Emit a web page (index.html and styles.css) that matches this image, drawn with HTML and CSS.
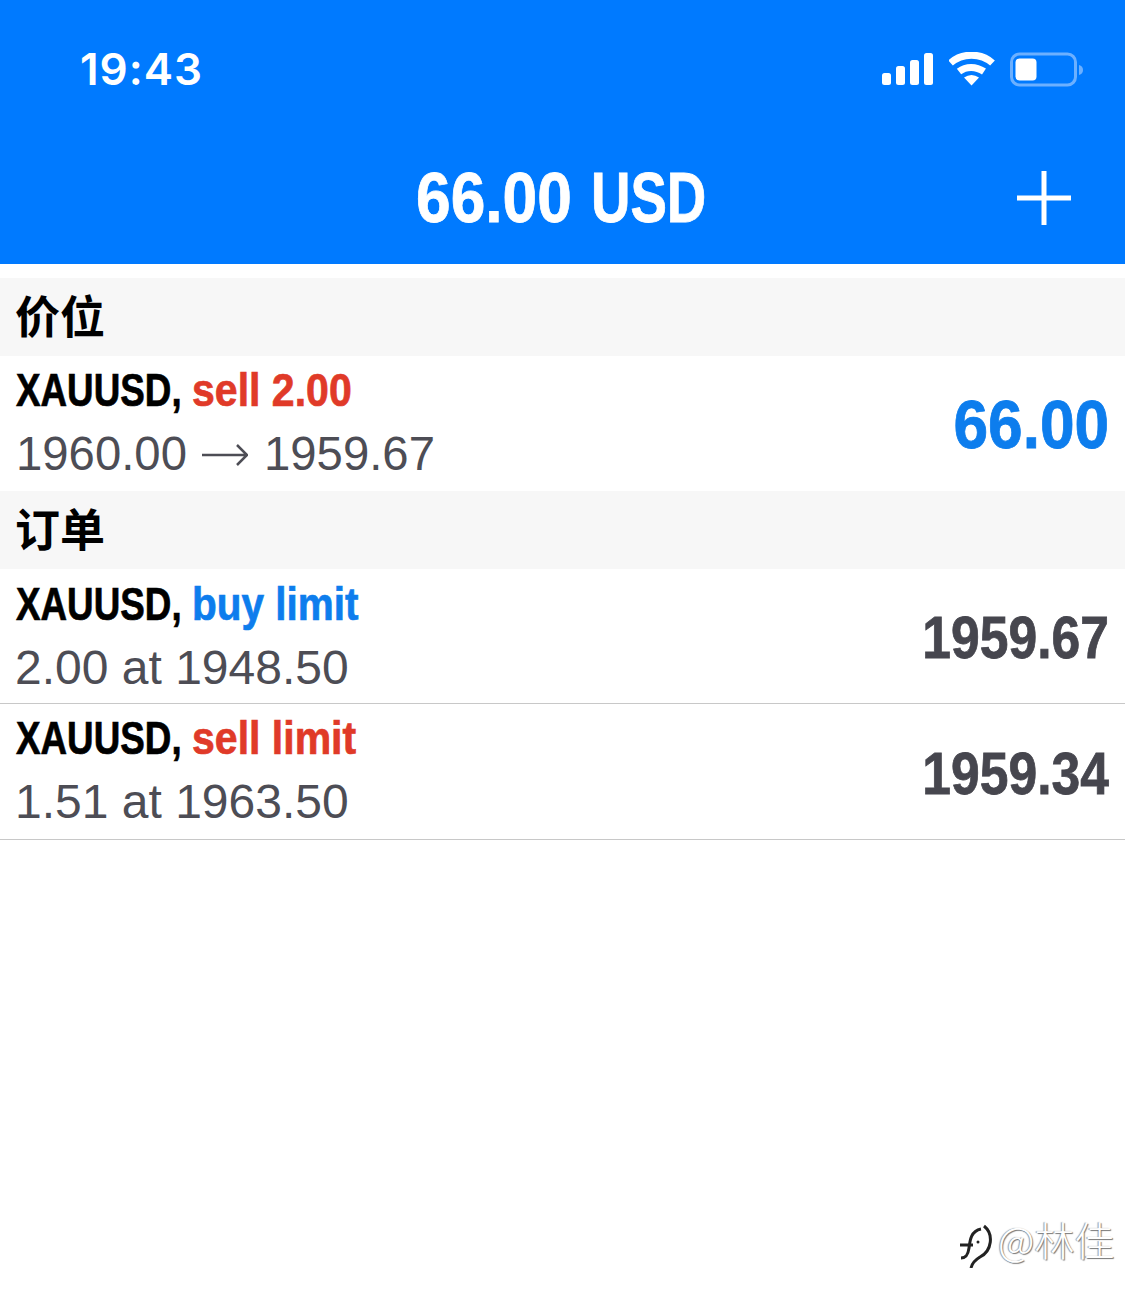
FILE: index.html
```html
<!DOCTYPE html>
<html lang="zh-CN">

<head>
	<meta charset="UTF-8">
	<meta name="viewport" content="width=device-width, initial-scale=1.0">
	<title>Trade</title>
	<link rel="stylesheet" href="styles.css">
</head>

<body>
	<header class="top">
		<div class="status">
			<span class="time">19:43</span>
			<div class="status-icons">
				<svg class="signal" width="52" height="34" viewBox="0 0 52 34">
					<rect x="0" y="21" width="9" height="12" rx="2.5" />
					<rect x="14" y="14" width="9" height="19" rx="2.5" />
					<rect x="28" y="8" width="9" height="25" rx="2.5" />
					<rect x="42" y="1" width="9" height="32" rx="2.5" />
				</svg>
				<svg class="wifi" width="46" height="36" viewBox="0 0 46 36">
					<path d="M1.5 11C13 .5 32 .5 43.5 11" />
					<path d="M10 19.500C17 14 27 14 35 19.500" />
					<path d="M22.500 33.500L15 25.500Q22.500 20.500 30 25.500Z" class="wifi-dot" />
				</svg>
				<svg class="battery" width="74" height="36" viewBox="0 0 74 36">
					<rect x="1.500" y="2" width="64" height="31" rx="8" class="batt-shell" />
					<rect x="5.500" y="6.500" width="21" height="22" rx="4" class="batt-level" />
					<path d="M69 13Q73 14 73 18T69 23Z" class="batt-tip" />
				</svg>
			</div>
		</div>
		<div class="nav">
			<h1 class="nav-title"><span class="nav-num">66.00</span> <span class="nav-cur">USD</span></h1>
			<svg class="plus" width="56" height="56" viewBox="0 0 56 56">
				<path d="M28 1V55M1 28H55" />
			</svg>
		</div>
	</header>

	<main class="list">
		<h2 class="section">价位</h2>
		<div class="row">
			<div class="row-main">
				<div class="row-title"><span class="sym">XAUUSD,</span> <span class="side sell">sell 2.00</span></div>
				<div class="row-sub row-rate">1960.00<svg class="arrow" width="46" height="24" viewBox="0 0 46 24"><path d="M0 12H45M35 2L45 12L35 22" /></svg>1959.67</div>
			</div>
			<div class="profit">66.00</div>
		</div>

		<h2 class="section">订单</h2>
		<div class="row row-order">
			<div class="row-main">
				<div class="row-title"><span class="sym">XAUUSD,</span> <span class="side buy">buy limit</span></div>
				<div class="row-sub row-amount">2.00 at 1948.50</div>
			</div>
			<div class="price">1959.67</div>
		</div>
		<div class="row row-line">
			<div class="row-main">
				<div class="row-title"><span class="sym">XAUUSD,</span> <span class="side sell">sell limit</span></div>
				<div class="row-sub row-amount">1.51 at 1963.50</div>
			</div>
			<div class="price">1959.34</div>
		</div>
	</main>

	<div class="mark">
		<svg class="mark-logo" width="38" height="46" viewBox="0 0 38 46">
			<path d="M4 23H17M5 36C10 36 12 33 13 26C14 18 15 9 25 7" />
			<path d="M28 4C38 12 36 29 24 35C19 38 16 41 15 46" />
			<circle cx="22" cy="20" r="1.500" />
		</svg>
		<span class="mark-text">@林佳</span>
	</div>
</body>

</html>
```

FILE: styles.css
```css
body {
	margin: 0;
	height: 1304px;
	overflow: hidden;
	position: relative;
	background: #fff;
	font-family: "Liberation Sans", Arial, sans-serif;
}

.top {
	height: 264px;
	background: #007aff;
	color: #fff;
	padding: 0 44px 0 80px;
	box-sizing: border-box;
}

.status {
	height: 135px;
	display: flex;
	justify-content: space-between;
	align-items: flex-start;
}

.time {
	margin-top: 42px;
	font-family: Inter, sans-serif;
	font-weight: 600;
	font-size: 44px;
	line-height: 54px;
	letter-spacing: 1px;
}

.status-icons {
	margin: 52px -3px 0 0;
	display: flex;
	gap: 15px;
}

.signal rect {
	fill: #fff;
}

.wifi path {
	fill: none;
	stroke: #fff;
	stroke-width: 7px;
}

.wifi .wifi-dot {
	fill: #fff;
	stroke: none;
}

.batt-shell {
	fill: none;
	stroke: #6cb0ff;
	stroke-width: 3px;
}

.batt-level {
	fill: #fff;
}

.batt-tip {
	fill: #6cb0ff;
}

.nav {
	height: 129px;
	display: flex;
	justify-content: center;
	align-items: center;
	position: relative;
	margin-left: -36px;
}

.nav-title {
	margin: 0 3px 3px 0;
	font-size: 70px;
	line-height: 80px;
	font-weight: 700;
	white-space: nowrap;
	-webkit-text-stroke: .8px #fff;
}

.nav-title span {
	display: inline-block;
	transform-origin: left center;
}

.nav-num {
	transform: scaleX(.89);
	margin-right: -20px;
}

.nav-cur {
	transform: scaleX(.78);
	margin-right: -33px;
}

.plus {
	position: absolute;
	right: 9px;
	top: 35px;
}

.plus path {
	stroke: #fff;
	stroke-width: 5px;
	fill: none;
}

.list {
	padding-top: 14px;
}

.section {
	margin: 0;
	height: 78px;
	background: #f7f7f7;
	padding-left: 15px;
	font-family: "Noto Sans CJK SC", sans-serif;
	font-size: 45px;
	line-height: 74px;
	font-weight: 700;
	color: #000;
}

.row {
	height: 135px;
	display: flex;
	justify-content: space-between;
	align-items: center;
	padding: 0 16px;
	box-sizing: border-box;
	white-space: nowrap;
}

.row-order {
	height: 134px;
}

.row-line {
	border-top: 1px solid #c8c8c8;
	border-bottom: 1px solid #c8c8c8;
	height: 137px;
}

.row-main {
	margin-bottom: 3px;
}

.row-order .row-main {
	margin-bottom: 0;
}

.row-title {
	font-size: 46px;
	line-height: 62px;
	font-weight: 700;
	transform: scaleX(.8);
	transform-origin: left center;
	-webkit-text-stroke: .7px currentColor;
}

.sym {
	color: #000;
}

.side {
	display: inline-block;
	transform: scaleX(1.115);
	transform-origin: left center;
}

.sell {
	color: #e03a28;
}

.buy {
	color: #0d7ded;
	transform: scaleX(1.1);
}

.row-sub {
	margin-top: 1px;
	font-size: 48px;
	line-height: 64px;
	color: #4d4d55;
}

.row-rate {
	font-size: 47.300px;
}

.row-amount {
	margin-left: -1px;
}

.arrow {
	margin: 0 16px 0 15px;
	vertical-align: 3px;
}

.arrow path {
	fill: none;
	stroke: #4d4d55;
	stroke-width: 2.500px;
}

.profit {
	font-size: 68px;
	font-weight: 700;
	color: #0d7ded;
	transform: scaleX(.915);
	transform-origin: right center;
	-webkit-text-stroke: .8px currentColor;
}

.price {
	margin-top: 3px;
	font-size: 60px;
	font-weight: 700;
	color: #46464e;
	transform: scaleX(.86);
	transform-origin: right center;
	-webkit-text-stroke: .8px currentColor;
}

/* watermark */
.mark {
	position: absolute;
	left: 956px;
	top: 1216px;
	display: flex;
	align-items: flex-start;
	gap: 4px;
}

.mark-logo {
	margin-top: 6px;
}

.mark-logo path {
	fill: none;
	stroke: #222;
	stroke-width: 3px;
}

.mark-logo circle {
	fill: #222;
}

.mark-text {
	font-family: "Noto Sans CJK SC", sans-serif;
	font-weight: 300;
	font-size: 40px;
	line-height: 46px;
	color: #fff;
	text-shadow: 1px 1px 1px #777, -1px 0 1px #999;
}
```
